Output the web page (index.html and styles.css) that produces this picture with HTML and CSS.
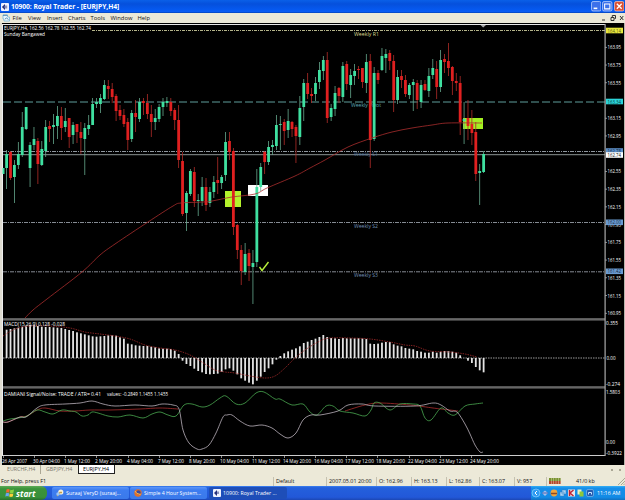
FILE: index.html
```
<!DOCTYPE html>
<html lang="en">
<head>
    <meta charset="UTF-8">
    <title>10900: Royal Trader - [EURJPY,H4]</title>
    <link rel="stylesheet" href="styles.css">
</head>
<body>

<header class="titlebar">
    <svg class="app-icon" viewBox="0 0 9 9"><rect width="9" height="9" rx="1" fill="#eef2ff"/><path d="M4.5 1L1 4.5L4.5 8V6H7V5H4V4H7V3H4.5Z" fill="#26307c"/></svg>
    <h1>10900: Royal Trader - [EURJPY,H4]</h1>
    <div class="window-buttons">
        <svg viewBox="0 0 10 10"><rect x=".5" y=".5" width="9" height="9" rx="1.5" fill="#3c71ea" stroke="#c5d8ff" stroke-width=".7"/><path d="M2.5 7H6" stroke="#fff" stroke-width="1.5"/></svg>
        <svg viewBox="0 0 10 10"><rect x=".5" y=".5" width="9" height="9" rx="1.5" fill="#3c71ea" stroke="#c5d8ff" stroke-width=".7"/><path d="M2.5 2.8H7.5V7.5H2.5Z" fill="none" stroke="#fff"/></svg>
        <svg viewBox="0 0 10 10"><rect x=".5" y=".5" width="9" height="9" rx="1.5" fill="#dc5033" stroke="#f5c9bd" stroke-width=".7"/><path d="M2.7 2.7L7.3 7.3M7.3 2.7L2.7 7.3" stroke="#fff" stroke-width="1.3"/></svg>
    </div>
</header>

<nav class="menu">
    <svg class="menu-icon" viewBox="0 0 8 8"><path d="M1 1H5.5V3H7.5V7H2V5H1Z" fill="#e9f5fc" stroke="#78b5d8" stroke-width=".8"/><path d="M1 1.3H5.5M3 5L4.5 4L6.5 5.5" fill="none" stroke="#387cae" stroke-width=".8"/></svg>
    <span class="m-file">File</span>
    <span class="m-view">View</span>
    <span class="m-insert">Insert</span>
    <span class="m-charts">Charts</span>
    <span class="m-tools">Tools</span>
    <span class="m-window">Window</span>
    <span class="m-help">Help</span>
    <svg class="mdi-buttons" viewBox="0 0 24 8"><path d="M1 6H4M10 3.5H13V6.5H10ZM11.3 3V1.5H14.5V4.5H13.5M19 2L22.3 6M22.3 2L19 6" fill="none" stroke="#333"/></svg>
</nav>

<main class="chart">
    <svg id="chart" viewBox="0 0 625 442" width="625" height="442"></svg>
</main>

<div class="tabs">
    <span class="tab t1">EURCHF,H4</span>
    <span class="tab t2">GBPJPY,H4</span>
    <span class="tab active">EURJPY,H4</span>
    <span class="tab-arrows"><i></i><i></i></span>
</div>

<div class="status">
    <span class="s-help">For Help, press F1</span>
    <span class="s-default">Default</span>
    <span class="s-date">2007.05.01 20:00</span>
    <span class="s-open">O: 162.96</span>
    <span class="s-high">H: 163.13</span>
    <span class="s-low">L: 162.86</span>
    <span class="s-close">C: 163.07</span>
    <span class="s-vol">V: 957</span>
    <span class="s-net"><svg viewBox="0 0 12 6"><path d="M0 1.5H12" stroke="#78912c" stroke-width="3" stroke-dasharray="2 .4"/><path d="M0 4.5H12" stroke="#b4472a" stroke-width="3" stroke-dasharray="2 .4"/></svg></span>
    <span class="s-kb">41/0 kb</span>
    <svg class="grip" viewBox="0 0 8 8"><path d="M1 8L8 1M4 8L8 4M6.5 8L8 6.5" stroke="#aca995"/></svg>
</div>

<footer class="taskbar">
    <div class="start">
        <svg viewBox="0 0 10 10"><path d="M1.5 1.5Q3 .5 4.7 1.5L4.2 4.7Q2.7 4 1 4.8Z" fill="#f26430"/><path d="M5.3 1.7Q7 2.5 9 1.6L8.4 4.8Q6.5 5.5 4.9 4.8Z" fill="#8bd33e"/><path d="M.9 5.3Q2.6 4.5 4.1 5.3L3.6 8.4Q2 7.6.3 8.5Z" fill="#69a6f5"/><path d="M4.7 5.4Q6.4 6.2 8.3 5.4L7.8 8.5Q6 9.3 4.2 8.5Z" fill="#fbd03b"/></svg>
        <span>start</span>
    </div>
    <div class="task k1">
        <svg viewBox="0 0 8 8"><circle cx="4.8" cy="3" r="2.6" fill="#f4efdc"/><path d="M1 7L4 3.5H6" fill="none" stroke="#c39f4a" stroke-width="1.3"/><circle cx="2" cy="5" r="1.7" fill="#9ec7f5"/></svg>
        <span>Suraaj VeryD (suraaj...</span>
    </div>
    <div class="task k2">
        <svg viewBox="0 0 8 8"><circle cx="4" cy="4" r="3.7" fill="#e0702a"/><circle cx="4.5" cy="3.3" r="2.1" fill="#3a4a9c"/><path d="M1 2Q2 5 6.5 5.5" fill="none" stroke="#f8b54a"/></svg>
        <span>Simple 4 Hour System...</span>
    </div>
    <div class="task k3">
        <svg viewBox="0 0 8 8"><rect width="8" height="8" rx="1" fill="#eef2ff"/><path d="M4 1L1 4L4 7V5H6V4.4H4V3.6H6V2.7H4Z" fill="#26307c"/></svg>
        <span>10900: Royal Trader ...</span>
    </div>
    <div class="tray">
        <svg viewBox="0 0 64 10">
            <circle cx="5" cy="5" r="4" fill="#2e9bf2" stroke="#9fd6ff" stroke-width=".6"/><path d="M6 3L4 5L6 7" fill="none" stroke="#fff"/>
            <path d="M11 5L14 2.5L17 5L14 8Z" fill="#a9bfe8"/><path d="M11 5H17" stroke="#4666b8"/>
            <circle cx="23" cy="5" r="3.4" fill="#f0a53c"/><path d="M20 5.5H26" stroke="#8c4b26" stroke-width="1.5"/>
            <path d="M29 4H33V8H29ZM31 2H35V6H31Z" fill="#a9d5f7" stroke="#3779ba" stroke-width=".5"/>
            <rect x="37" y="1.5" width="7" height="7" fill="#e6e6ea"/><path d="M38.5 2V8M42.5 2L39 5L42.5 8" fill="none" stroke="#c22535" stroke-width="1.5"/>
            <rect x="46.5" y="1.5" width="4" height="5" fill="#e8f1c8"/><rect x="48.5" y="3.5" width="4" height="5" fill="#8fc73b"/>
            <rect x="55.5" y="1.5" width="7" height="7" rx="1.5" fill="#275baf" stroke="#7db9ee" stroke-width=".7"/><path d="M57.5 6.5V4.5H60.5V6.5" fill="none" stroke="#c8e4ff"/>
        </svg>
        <span>11:16 AM</span>
    </div>
</footer>

<script src="chart.js"></script>
</body>
</html>
```

FILE: styles.css
```
body {
    margin: 0;
    width: 625px;
    height: 500px;
    overflow: hidden;
    display: flex;
    flex-direction: column;
    background: #ece9d8;
    font-family: "Open Sans", "DejaVu Sans", sans-serif;
    font-size: 5.8px;
    color: #111;
    white-space: nowrap;
}
.titlebar {
    flex: none;
    height: 13px;
    box-sizing: border-box;
    display: flex;
    align-items: center;
    background: linear-gradient(#0a60e8 0, #0550dc 30%, #0659f0 75%, #0a5cf4 90%, #0341b4);
    color: #fff;
}
.app-icon {
    width: 8px;
    height: 8px;
    margin-left: 1px;
}
h1 {
    margin: 0 0 0 2px;
    font-size: 6.7px;
    line-height: 12px;
    font-weight: 700;
    letter-spacing: -0.05px;
    width: 108px;
}
.window-buttons {
    margin-left: auto;
    display: flex;
    gap: 1px;
    padding-right: 1px;
}
.window-buttons svg {
    width: 10.5px;
    height: 10.5px;
}
.menu {
    flex: none;
    height: 10px;
    display: flex;
    align-items: center;
    line-height: 9px;
}
.menu-icon {
    width: 8px;
    height: 8px;
    margin-left: 2px;
    margin-right: 2.5px;
}
.m-file { width: 15.5px; }
.m-view { width: 19px; }
.m-insert { width: 21px; }
.m-charts { width: 22.5px; }
.m-tools { width: 20px; }
.m-window { width: 27px; }
.mdi-buttons {
    width: 24px;
    height: 8px;
    margin-left: auto;
}
.chart {
    flex: none;
    height: 442px;
}
.chart svg {
    display: block;
}
.chart text {
    font-family: "Open Sans", "DejaVu Sans", sans-serif;
    font-size: 5.3px;
    fill: #fff;
}
.tabs {
    flex: none;
    height: 11px;
    display: flex;
    align-items: flex-start;
    font-size: 5.3px;
    line-height: 9px;
}
.tab {
    color: #77756a;
    height: 9px;
    box-sizing: border-box;
}
.t1 {
    width: 41px;
    padding-left: 7px;
    border-right: 1px solid #aaa795;
}
.t2 {
    width: 37px;
    padding-left: 5px;
}
.tab.active {
    width: 37px;
    padding-left: 4px;
    background: #fff;
    border: 1px solid #222;
    border-top: 0;
    color: #000;
    line-height: 8px;
}
.tab-arrows {
    margin-left: auto;
    display: flex;
    gap: 6px;
    padding: 4px 4px 0 0;
}
.tab-arrows i {
    width: 2px;
    height: 2px;
    background: #aaa795;
}
.status {
    flex: none;
    height: 10px;
    display: flex;
    align-items: center;
    font-size: 5.4px;
    line-height: 9px;
}
.status span {
    box-sizing: border-box;
    padding-left: 2px;
    border-left: 1px solid #c4c1b0;
}
.status .s-help {
    width: 273px;
    padding-left: 1px;
    border-left: 0;
}
.s-default { width: 53px; }
.s-date { width: 50px; }
.s-open { width: 35px; }
.s-high { width: 35px; }
.s-low { width: 33px; }
.s-close { width: 35px; }
.s-vol { width: 32px; }
.s-net {
    width: 28px;
    height: 9px;
    display: flex;
    align-items: center;
}
.s-net svg {
    width: 12px;
    height: 6px;
}
.status .s-kb {
    border: 0;
}
.grip {
    width: 8px;
    height: 8px;
    margin-left: auto;
}
.taskbar {
    flex: none;
    height: 14px;
    display: flex;
    background: linear-gradient(#3c81f0 0, #2460dc 12%, #2258d8 80%, #1c47b4);
    color: #fff;
    font-size: 5.4px;
    line-height: 13px;
}
.start {
    width: 47px;
    box-sizing: border-box;
    padding-left: 5px;
    display: flex;
    align-items: center;
    gap: 1px;
    background: linear-gradient(#5eac56 0, #3b933b 20%, #38903a 80%, #27702c);
    border-radius: 0 6px 6px 0;
    font-size: 8.4px;
    font-weight: 700;
    font-style: italic;
}
.start svg {
    width: 10px;
    height: 10px;
}
.task {
    box-sizing: border-box;
    width: 77px;
    height: 12px;
    margin: 1px 1px 0 0;
    padding-left: 4px;
    display: flex;
    align-items: center;
    gap: 2px;
    border-radius: 2px;
    background: linear-gradient(#5c96f8, #3d7df0 25%, #3a79ea);
}
.task svg {
    width: 8px;
    height: 8px;
}
.k1 { margin-left: 5px; }
.k2 { font-size: 5.2px; }
.k3 {
    margin-left: 1px;
    width: 78px;
    background: #1e4eb8;
    font-size: 5.2px;
}
.tray {
    margin-left: auto;
    width: 94px;
    display: flex;
    align-items: center;
    gap: 2px;
    background: linear-gradient(#35b0f4 0, #168ee9 15%, #128be6 80%, #1170c0);
}
.tray svg {
    width: 64px;
    height: 10px;
}
```

FILE: chart.js
```
// chart area starts 23px below the top of the window
const TOP = 23;
const STEP = 3.91;
const FIRST_X = 6.6;
const svg = document.getElementById("chart");
const GREEN = "#3fe0a0", RED = "#e02020";

// direction, body top, body bottom, high, low
const candles = `g154,168,150,189 r152,178,151,180 g165,177,160,203 g154,165,142,169 g127,155,112,157
g107,129,107,130 g145,168,142,187 g139,145,127,150 r141,164,138,184 g149,165,141,166
g127,151,120,157 r126,129,121,142 g125,127,114,144 g116,126,106,139 r116,128,107,140
g121,127,108,132 r118,137,118,148 g125,135,122,144 r124,132,124,143 r132,138,122,154
g128,139,123,175 g125,129,115,135 g104,125,98,125 g102,104,98,108 g98,104,94,113
g85,99,80,100 r86,89,80,99 r89,97,83,103 r96,111,94,121 r110,116,105,120
r115,124,109,127 r122,140,118,150 g113,139,110,142 r113,117,100,132 g102,119,98,122
r101,103,98,115 r103,114,94,119 r114,122,105,137 g118,122,109,130 g107,119,104,122
g102,107,98,116 g101,103,97,107 r102,111,98,116 r110,120,108,130 r120,160,105,168
r161,214,152,216 g193,213,191,231 g171,194,169,196 r172,201,167,207 g200,201,194,216
g187,201,177,206 r187,205,178,211 g192,203,187,207 g182,192,176,198 r180,183,157,194
g177,183,175,189 g142,175,132,181 r141,152,132,160 r151,227,148,235 r225,250,224,259
r250,271,245,285 g254,272,243,275 r253,266,249,281 g263,267,250,304 g187,262,169,267
g167,187,163,191 r152,162,151,174 g147,162,141,165 g145,147,140,155 g125,146,115,150
g124,125,116,150 r122,131,119,145 g121,130,109,138 r122,129,121,137 r127,136,125,163
g108,137,96,145 g83,107,79,121 r83,94,73,99 r94,96,88,103 g83,94,77,101
g70,82,62,89 g60,71,56,80 r60,118,52,123 g108,117,104,121 g93,109,86,116
r88,96,87,103 g66,97,62,102 r64,84,61,90 g75,85,69,98 g71,76,64,85
r69,70,66,79 r68,82,68,88 g62,83,54,93 r61,140,54,168 g73,139,67,141
r73,80,70,84 g56,70,48,71 g54,58,49,73 r53,61,50,70 r61,100,55,112
g77,100,70,104 r76,80,70,88 r80,94,75,97 g85,95,83,99 g82,85,79,111
r83,100,80,109 g85,102,80,108 r84,90,80,91 g76,91,68,97 g68,75,59,79
r69,87,61,99 g60,87,50,92 r59,62,54,73 r61,68,43,76 r67,81,66,95
r81,83,73,91 r83,122,76,135 g119,121,102,144 r118,126,100,140 r124,133,110,145
r132,174,122,181 g171,173,164,205 g154,172,151,173`.split(/\s+/);

// MACD histogram, in thirds of a pixel over the zero line
const macd = [85,87,89,91,94,96,99,99,96,94,93,93,92,91,90,87,84,81,77,74,71,68,65,64,65,66,68,68,67,62,58,43,41,38,37,36,36,34,32,29,28,28,27,22,12,
-8,-18,-24,-32,-39,-43,-48,-49,-48,-47,-42,-34,-31,-38,-49,-61,-68,-74,-79,-68,-56,-42,-31,-19,-5,
6,14,20,25,29,35,45,49,54,58,63,69,63,60,59,57,60,59,59,59,59,59,57,43,42,43,46,48,48,41,37,35,30,28,26,
21,19,16,16,19,16,19,21,21,19,16,8,0,-8,-15,-27,-37,-43];

function add(tag, attrs, text) {
    const el = document.createElementNS("http://www.w3.org/2000/svg", tag);
    for (const key in attrs) el.setAttribute(key, attrs[key]);
    if (text) el.textContent = text;
    svg.appendChild(el);
}
function rect(x, y, w, h, fill) {
    add("rect", { x: x, y: y - TOP, width: w, height: h, fill: fill });
}
function hline(y, color, dash, x1, x2) {
    add("line", { x1: x1 || 3, x2: x2 || 605, y1: y - TOP, y2: y - TOP, stroke: color, "stroke-width": 1, "stroke-dasharray": dash || "none" });
}
function label(x, y, str, width, fill, size) {
    const attrs = { x: x, y: y - TOP };
    if (width) { attrs.textLength = width; attrs.lengthAdjust = "spacingAndGlyphs"; }
    attrs.style = (fill ? "fill:" + fill + ";" : "") + (size ? "font-size:" + size + "px" : "");
    add("text", attrs, str);
}
// smooth line through the points
function curve(points, color, dash, width) {
    const p = points.trim().split(/\s+/).map(s => s.split(",").map(Number));
    let d = "M" + p[0][0] + " " + (p[0][1] - TOP);
    for (let i = 0; i < p.length - 1; i++) {
        const a = p[i - 1] || p[i], b = p[i], c = p[i + 1], e = p[i + 2] || c;
        d += "C" + [b[0] + (c[0] - a[0]) / 6, b[1] + (c[1] - a[1]) / 6 - TOP,
            c[0] - (e[0] - b[0]) / 6, c[1] - (e[1] - b[1]) / 6 - TOP, c[0], c[1] - TOP].join(" ");
    }
    add("path", { d: d, fill: "none", stroke: color, "stroke-width": width || 0.8, "stroke-dasharray": dash || "none" });
}

// frame
rect(0, 23, 625, 442, "#000");
rect(0, 23, 2, 442, "#dedbd0");
rect(2, 24, 1, 432, "#eee");
rect(2, 24, 603, 1, "#e8e8e8");
rect(624, 23, 1, 442, "#b8b6ac");

// price levels
hline(30.5, "#b5b58a", "3 1 1 1", 92);
hline(102, "#5f9d9b", "8 3");
hline(151.5, "#8e969e", "4 1 1 1");
hline(154.7, "#8c9494");
hline(222.5, "#858b93", "4 1 1 1");
hline(271.8, "#858b93", "4 1 1 1");
label(354, 36, "Weekly R1", 25, "#d9d992");
label(351, 107, "Weekly Pivot", 30, "#5ba9b5");
label(354, 156, "Weekly S1", 24, "#50749c");
label(354, 228, "Weekly S2", 24, "#7191b5");
label(354, 277, "Weekly S3", 24, "#7191b5");

// marked zones
rect(225, 191, 16, 16, "#b4f22c");
rect(248, 185, 20, 11, "#fff");
rect(463, 118, 20, 11, "#a4f022");

rect(2.5, 168, 2, 6, GREEN);
candles.forEach((c, i) => {
    const x = FIRST_X + i * STEP;
    const v = c.slice(1).split(",").map(Number);
    const up = c[0] === "g";
    rect(x - 0.4, v[2], 0.8, v[3] - v[2], up ? "#65a78c" : "#b02c28");
    rect(x - 1.4, v[0], 2.8, Math.max(1, v[1] - v[0]), up ? GREEN : RED);
});
curve("25,318 33,310 47,299 82,272 100,255 115,244 148,222 173,206 181,203 203,202 212,201 232,197 255,194 267,188 295,176 310,168 325,160 348,147 372,138 392,132 412,128 432,125 448,123 482,123", "#a92d2d");
add("path", { d: "M259.5 244L262 247.5L268.5 239", fill: "none", stroke: "#b7ef3b", "stroke-width": 1.4 });
add("path", { d: "M480.5 2H486L483.2 4.5Z", fill: "#aaa" });

// MACD
hline(358, "#999", "1.5 1");
macd.forEach((v, i) => {
    const h = Math.abs(v) / 3;
    rect(FIRST_X + i * STEP - 0.9, v > 0 ? 358 - h : 358, 1.8, h, "#e4e4e4");
});
curve("3,336 15,329 30,326 50,326 70,328 85,332 100,334 115,336 130,339 145,345 160,348 175,350 190,355 205,364 215,370 225,372 235,373 250,376 265,378 275,376 285,368 293,360 305,350 320,341 330,338 350,338 370,339 390,342 405,345 415,346 430,351 450,352 465,354 477,357", "#9d2828", "1.5 1");

// Damiani
curve("3,422 8,422 20,417 27,416 37,410 45,408 60,411 75,411 90,410 110,410 140,409 160,408 178,409", "#a92d2d");
curve("345,411 365,405 380,403 410,405 433,408 441,409 450,410 458,411", "#a92d2d");
curve("3,421 10,419 18,418 27,416 37,410 45,412 53,414 62,410 70,411 76,412 82,416 88,415 92,412 98,413 108,416 118,417 130,415 143,418 152,414 160,412 168,415 176,416 184,405 192,404 202,407 210,405 220,398 226,396 236,404 245,403 256,393 264,392 275,399 280,399 292,405 303,404 310,412 317,415 326,406 333,406 340,411 353,413 365,416 371,410 374,403 380,403 390,410 400,404 413,404 420,406 425,418 431,420 441,408 448,413 455,415 465,406 475,404 483,403", "#4aa851");
curve("3,422 8,422 20,417 26,417 37,408 45,405 65,404 80,403 92,401 103,404 115,406 135,405 152,406 162,404 173,405 179,409 183,430 189,443 197,449 202,449 209,445 216,433 223,417 227,415 232,415 240,421 250,426 262,425 272,428 280,434 288,438 296,433 303,420 311,415 320,415 338,411 348,405 362,404 375,406 415,406 433,403 441,405 450,411 457,412 465,424 470,434 475,445 480,452 483,452", "#bbb2bd");

// panel borders
hline(319, "#b4b4b4", "", 3, 605);
hline(320, "#777");
hline(387, "#aaa");
hline(388, "#777");
hline(455.5, "#ccc");
rect(604.5, 24, 1.2, 432, "#aaa");

// captions
label(4, 30, "EURJPY,H4, 162.56 162.78 162.55 162.74", 87, "", 4.9);
label(4, 36, "Sunday Bangawed", 41, "", 4.9);
label(4, 326, "MACD(15,26,9) 0.128 -0.028", 61);
label(4, 395.5, "DAMIANI Signal/Noise: TRADE  /  ATR= 0.41", 97);
label(107, 395.5, "values: -0.2849 1.1455 1.1455", 61);

// price scale
["163.95", "163.75", "163.55", "", "163.15", "162.95", "", "162.55", "162.35", "162.15", "161.95", "161.75", "161.55", "161.35", "161.15", "160.95"].forEach((s, i) => {
    const y = 47.3 + i * 17.73;
    if (!s) return;
    rect(605, y - 0.4, 2, 0.8, "#aaa");
    label(607.5, y + 2, s, 13.5);
});
function tag(y, str, bg, color) {
    rect(606, y - 2.8, 17, 5.6, bg);
    label(607.5, y + 2, str, 13.5, color);
}
tag(30.5, "164.14", "#e9e83e", "#5a5a10");
tag(101.5, "163.34", "#2cd4d8", "#053c40");
tag(151, "162.78", "#5c8ec6", "#10263f");
tag(155, "162.74", "#fff", "#111");
tag(222.3, "162.00", "#6b9bd0", "#10263f");
tag(271.3, "161.42", "#6b9bd0", "#10263f");
label(606, 325, "0.355", 12);
label(606.5, 360, "0.00", 9);
label(606, 386, "-0.274", 14);
label(606, 394, "1.5803", 14);
label(606, 444, "0.00", 9);
label(606, 454.5, "-0.3922", 16);

// time scale
[[2, "26 Apr 2007", 25], [33, "30 Apr 04:00", 27], [64, "1 May 12:00", 26], [95, "2 May 20:00", 27], [127, "4 May 04:00", 26],
 [158, "7 May 12:00", 26], [189, "8 May 20:00", 26], [220, "10 May 04:00", 29], [252, "11 May 12:00", 28], [283, "14 May 20:00", 28],
 [314, "16 May 04:00", 29], [345, "17 May 12:00", 29], [376, "18 May 20:00", 29], [408, "22 May 04:00", 29], [439, "23 May 12:00", 29],
 [470, "24 May 20:00", 29]].forEach(t => {
    rect(t[0] + 1, 456, 0.8, 2, "#aaa");
    label(t[0], 462.5, t[1], t[2]);
});
```
